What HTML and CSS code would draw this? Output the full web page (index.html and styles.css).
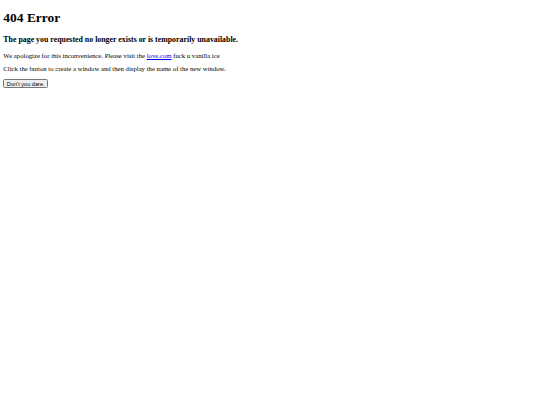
FILE: index.html
```html
<!DOCTYPE html>
<html>
<head>
<meta charset="utf-8">
<title>404 Error</title>
<link rel="stylesheet" href="styles.css">
</head>
<body>
<h1 class="title">404 Error</h1>
<h3 class="subtitle">The page you requested no longer exists or is temporarily unavailable.</h3>
<p class="text">We apologize for this inconvenience. Please visit the <a href="#" class="link">love.com</a> fuck u vanilla ice</p>
<p class="text">Click the button to create a window and then display the name of the new window.</p>
<button class="btn">Don't you dare.</button>
</body>
</html>
```
FILE: styles.css
```css
html { background: #fff; }
body {
  margin: 3.36px;
  font-family: "Liberation Serif", serif;
  font-size: 6.72px;
  color: #000;
}
.title {
  font-size: 13.44px;
  font-weight: bold;
  margin: 6.5px 0 9px;
}
.subtitle {
  font-size: 7.86px;
  font-weight: bold;
  margin: 7.86px 0;
}
.text {
  font-size: 6.72px;
  margin: 6.72px 0;
}
.link { color: #0000ee; }
.btn {
  font-family: "Liberation Sans", sans-serif;
  font-size: 5.6px;
  padding: 0.6px 2.5px;
  margin: 0;
  border: 0.5px solid #767676;
  border-radius: 1.5px;
  background: #efefef;
  color: #000;
}
```
